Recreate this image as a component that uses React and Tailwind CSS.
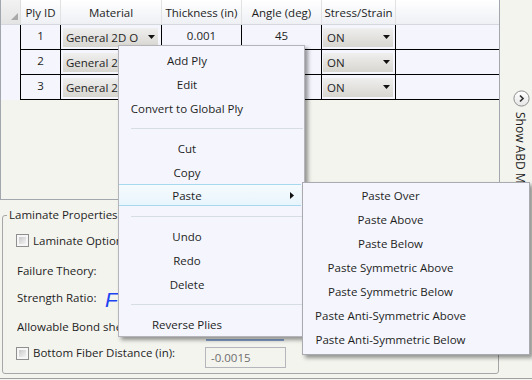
import React from 'react';

function DownArrow() {
  return (
    <svg width="7" height="4" viewBox="0 0 7 4" className="shrink-0">
      <path d="M0 0H7L3.5 4Z" fill="#111" />
    </svg>
  );
}

function Combo({ text, wide }) {
  return (
    <div
      className={
        wide
          ? 'ml-[2px] w-[95px] h-[19px] flex items-center justify-between pl-[3px] pr-[3px] bg-gradient-to-b from-[#efefef] to-[#d8d6d0]'
          : 'ml-[1px] w-[70px] h-[19px] flex items-center justify-between pl-[4px] pr-[3px] bg-gradient-to-b from-[#efefef] to-[#d8d6d0]'
      }
    >
      <span className="whitespace-nowrap overflow-hidden pt-[1px]">{text}</span>
      <DownArrow />
    </div>
  );
}

function Check() {
  return (
    <div className="w-[13px] h-[13px] border border-[#8f8f8f] bg-[#f6f6f6] p-[2px] shrink-0">
      <div className="w-full h-full bg-gradient-to-br from-[#c9c9c9] to-[#f4f4f4]" />
    </div>
  );
}

const rows = [
  { id: '1', thick: '0.001', angle: '45' },
  { id: '2', thick: '', angle: '' },
  { id: '3', thick: '', angle: '' },
];

function MenuItem({ children }) {
  return (
    <div className="h-[24px] flex items-center pt-[1px]">
      <span className="w-[136px] text-center whitespace-nowrap">{children}</span>
    </div>
  );
}

function Sep() {
  return (
    <div className="h-[16px] flex items-center ml-[12px] mr-[1px]">
      <div className="w-full border-t border-[#d6dde4]" />
    </div>
  );
}

function SubItem({ children }) {
  return (
    <div className="h-[24px] flex items-center">
      <span className="w-[175px] text-center whitespace-nowrap">{children}</span>
    </div>
  );
}

export default function App() {
  return (
    <div className="w-[532px] h-[380px] relative overflow-hidden bg-[#f4f4ef] text-[#1e1e1e] font-['Open_Sans',sans-serif] text-[11.5px] leading-none">
      {/* top: grid + side strip */}
      <div className="flex h-[200px]">
        <div className="w-[500px] h-[200px] border-l border-r border-b border-[#a2a7ae] flex flex-col">
          {/* header */}
          <div className="flex h-[25px] shrink-0 border-b border-[#d5d8dd] bg-gradient-to-b from-[#ffffff] to-[#eef0f4]">
            <div className="w-[20px] border-r border-[#dedede] bg-gradient-to-b from-[#f2f2f2] to-[#e4e4e4] flex items-end justify-end pr-[2px] pb-[4px]">
              <svg width="7" height="7" viewBox="0 0 7 7">
                <path d="M7 0V7H0Z" fill="#a9a9a9" />
              </svg>
            </div>
            <div className="w-[40px] border-r border-[#e2e2e2] flex items-center justify-center pt-[2px]">Ply ID</div>
            <div className="w-[101px] border-r border-[#e2e2e2] flex items-center justify-center pt-[2px]">Material</div>
            <div className="w-[80px] border-r border-[#e2e2e2] flex items-center justify-center pt-[2px] whitespace-nowrap">Thickness (in)</div>
            <div className="w-[80px] border-r border-[#e2e2e2] flex items-center justify-center pt-[2px] whitespace-nowrap">Angle (deg)</div>
            <div className="w-[74px] border-r border-[#e2e2e2] flex items-center justify-center pt-[2px] whitespace-nowrap">Stress/Strain</div>
            <div className="flex-1" />
          </div>
          {/* rows */}
          {rows.map((r) => (
            <div key={r.id} className="flex h-[25px] shrink-0 bg-[#f4f5fd]">
              <div className="w-[20px] border-r border-black" />
              <div className="w-[40px] border-r border-b border-black flex items-center justify-center pb-[2px]">{r.id}</div>
              <div className="w-[101px] border-r border-b border-black flex items-center">
                <Combo text="General 2D O" wide />
              </div>
              <div className="w-[80px] border-r border-b border-black flex items-center justify-center pb-[2px]">{r.thick}</div>
              <div className="w-[80px] border-r border-b border-black flex items-center justify-center pb-[2px]">{r.angle}</div>
              <div className="w-[74px] border-r border-b border-black flex items-center">
                <Combo text="ON" />
              </div>
              <div className="flex-1 border-b border-black" />
            </div>
          ))}
          <div className="flex-1 bg-[#f4f4ef]" />
        </div>
        {/* side strip */}
        <div className="flex-1 flex flex-col items-start pl-[13px] pt-[90px] overflow-hidden">
          <svg width="17" height="17" viewBox="0 0 17 17" className="shrink-0">
            <defs>
              <linearGradient id="cg" x1="0" y1="0" x2="0" y2="1">
                <stop offset="0" stopColor="#ffffff" />
                <stop offset="1" stopColor="#e6e6e6" />
              </linearGradient>
            </defs>
            <circle cx="8.5" cy="8.5" r="7.6" fill="url(#cg)" stroke="#8e8e8e" strokeWidth="1" />
            <path d="M7 5.5L10 8.5L7 11.5" fill="none" stroke="#333" strokeWidth="1.7" />
          </svg>
          <div className="mt-[5px] -ml-[1px] [writing-mode:vertical-rl] whitespace-nowrap text-[12px] leading-[16px]">
            Show ABD M
          </div>
        </div>
      </div>

      {/* laminate properties */}
      <fieldset className="mt-[7px] ml-[2px] w-[497px] h-[167px] border border-[#a6a6a6] rounded-[3px]">
        <legend className="ml-[4px] px-[2px] h-[16px] leading-[16px]">Laminate Properties</legend>
        <div className="flex flex-col pl-[13px]">
          <div className="h-[35px] flex items-center">
            <Check />
            <span className="ml-[4px] whitespace-nowrap">Laminate Options</span>
          </div>
          <div className="h-[26px] flex items-center pl-[1px]">Failure Theory:</div>
          <div className="h-[28px] flex items-center pl-[1px]">
            <span className="w-[88px] whitespace-nowrap">Strength Ratio:</span>
            <span className="font-['Liberation_Sans',sans-serif] italic text-[21px] leading-none text-[#1e44f2] pt-[2px]">F</span>
          </div>
          <div className="h-[29px] flex items-center pl-[1px]">
            <span className="w-[189px] overflow-hidden whitespace-nowrap">Allowable Bond shear:</span>
            <div className="self-end h-[20px] w-[78px] border-b-2 border-[#86a0cc]" />
          </div>
          <div className="h-[24px] flex items-center">
            <Check />
            <span className="ml-[4px] w-[172px] whitespace-nowrap">Bottom Fiber Distance (in):</span>
            <div className="self-start mt-[6px] h-[21px] w-[81px] border border-[#b4b6bb] flex items-center pl-[5px] text-[#6d6d6d]">
              -0.0015
            </div>
          </div>
        </div>
      </fieldset>
      <div className="mt-[4px] border-t border-[#a0a0a0]" />

      {/* context menu */}
      <div className="absolute left-[118px] top-[45px] w-[187px] h-[292px] border border-[#b4b4ba] bg-[#f5f6fd] pt-[2px] shadow-[3px_3px_4px_rgba(0,0,0,0.4)]">
        <MenuItem>Add Ply</MenuItem>
        <MenuItem>Edit</MenuItem>
        <MenuItem>Convert to Global Ply</MenuItem>
        <Sep />
        <MenuItem>Cut</MenuItem>
        <MenuItem>Copy</MenuItem>
        <div className="h-[24px] pb-[2px] mr-[3px]">
          <div className="h-full flex items-center border-t border-b border-[#a8d8ee] bg-gradient-to-b from-[#f5fbfe] to-[#e8f5fc] relative">
            <span className="w-[136px] text-center pt-[1px]">Paste</span>
            <svg width="4" height="7" viewBox="0 0 4 7" className="ml-[35px]">
              <path d="M0 0L4 3.5L0 7Z" fill="#111" />
            </svg>
          </div>
        </div>
        <Sep />
        <MenuItem>Undo</MenuItem>
        <MenuItem>Redo</MenuItem>
        <MenuItem>Delete</MenuItem>
        <Sep />
        <MenuItem>Reverse Plies</MenuItem>
      </div>

      {/* submenu */}
      <div className="absolute left-[302px] top-[182px] w-[228px] h-[173px] border border-[#a9a9b0] bg-[#f5f6fd] py-[1px] shadow-[3px_3px_4px_rgba(0,0,0,0.4)]">
        <SubItem>Paste Over</SubItem>
        <SubItem>Paste Above</SubItem>
        <SubItem>Paste Below</SubItem>
        <SubItem>Paste Symmetric Above</SubItem>
        <SubItem>Paste Symmetric Below</SubItem>
        <SubItem>Paste Anti-Symmetric Above</SubItem>
        <SubItem>Paste Anti-Symmetric Below</SubItem>
      </div>
    </div>
  );
}
